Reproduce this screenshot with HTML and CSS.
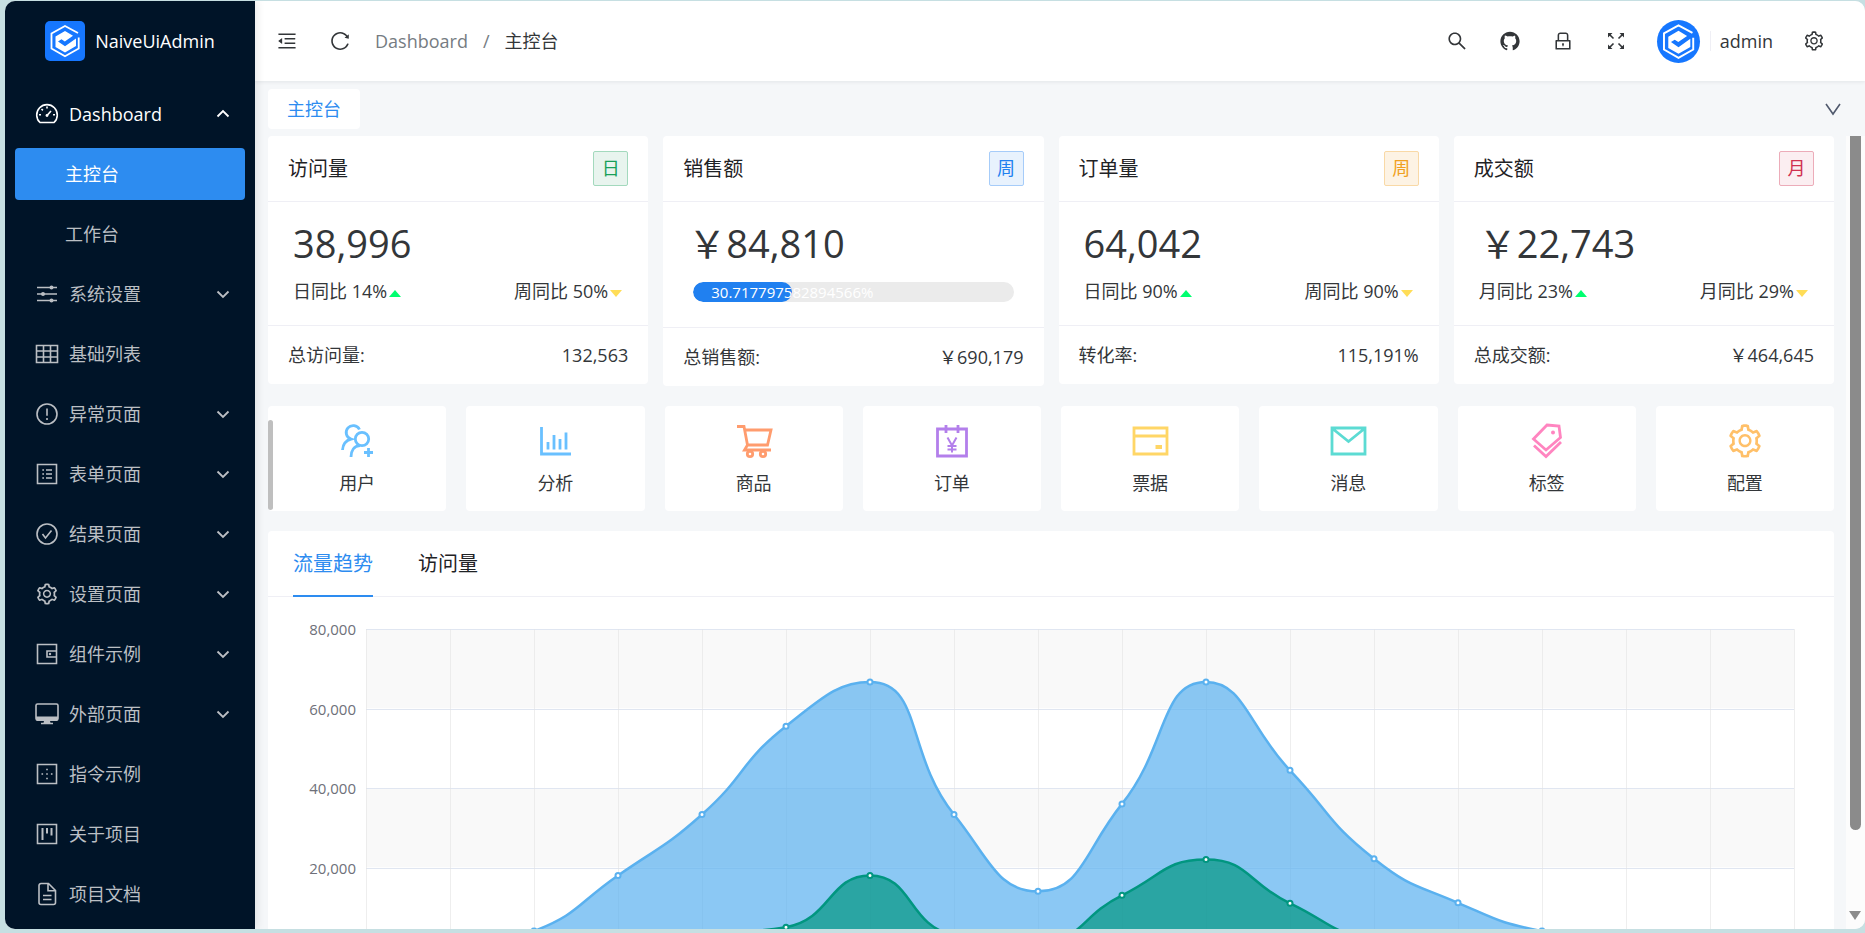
FILE: index.html
```html
<!DOCTYPE html>
<html lang="zh-CN">
<head>
<meta charset="utf-8">
<title>NaiveUiAdmin</title>
<link rel="stylesheet" href="styles.css">
</head>
<body>
<svg class="sprite" aria-hidden="true">
  <symbol id="i-gear" viewBox="0 0 1024 1024"><path fill="currentColor" d="M924.8 625.7l-65.5-56c3.1-19 4.7-38.4 4.7-57.8s-1.6-38.8-4.7-57.8l65.5-56a32.03 32.03 0 0 0 9.3-35.2l-.9-2.6a443.74 443.74 0 0 0-79.7-137.9l-1.8-2.1a32.12 32.12 0 0 0-35.1-9.5l-81.3 28.9c-30-24.6-63.5-44-99.7-57.6l-15.7-85a32.05 32.05 0 0 0-25.8-25.7l-2.7-.5c-52.1-9.4-106.9-9.4-159 0l-2.7.5a32.05 32.05 0 0 0-25.8 25.7l-15.8 85.4a351.86 351.86 0 0 0-99 57.4l-81.9-29.1a32 32 0 0 0-35.1 9.5l-1.8 2.1a446.02 446.02 0 0 0-79.7 137.9l-.9 2.6c-4.5 12.5-.8 26.5 9.3 35.2l66.3 56.6c-3.1 18.8-4.6 38-4.6 57.1 0 19.2 1.5 38.4 4.6 57.1L99 625.5a32.03 32.03 0 0 0-9.3 35.2l.9 2.6c18.1 50.4 44.9 96.9 79.7 137.9l1.8 2.1a32.12 32.12 0 0 0 35.1 9.5l81.9-29.1c29.8 24.5 63.1 43.9 99 57.4l15.8 85.4a32.05 32.05 0 0 0 25.8 25.7l2.7.5a449.4 449.4 0 0 0 159 0l2.7-.5a32.05 32.05 0 0 0 25.8-25.7l15.7-85a350 350 0 0 0 99.7-57.6l81.3 28.9a32 32 0 0 0 35.1-9.5l1.8-2.1c34.8-41.1 61.6-87.5 79.7-137.9l.9-2.6c4.5-12.3.8-26.3-9.3-35zM788.3 465.9c2.5 15.1 3.8 30.6 3.8 46.1s-1.3 31-3.8 46.1l-6.6 40.1 74.7 63.9a370.03 370.03 0 0 1-42.6 73.6L721 702.8l-31.4 25.8c-23.9 19.6-50.5 35-79.3 45.8l-38.1 14.3-17.9 97a377.5 377.5 0 0 1-85 0l-17.9-97.2-37.8-14.5c-28.5-10.8-55-26.2-78.7-45.7l-31.4-25.9-93.4 33.2c-17-22.9-31.2-47.6-42.6-73.6l75.5-64.5-6.5-40c-2.4-14.9-3.7-30.3-3.7-45.5 0-15.3 1.2-30.6 3.7-45.5l6.5-40-75.5-64.5c11.3-26.1 25.6-50.7 42.6-73.6l93.4 33.2 31.4-25.9c23.7-19.5 50.2-34.9 78.7-45.7l37.9-14.3 17.9-97.2c28.1-3.2 56.8-3.2 85 0l17.9 97 38.1 14.3c28.7 10.8 55.4 26.2 79.3 45.8l31.4 25.8 92.8-32.9c17 22.9 31.2 47.6 42.6 73.6L781.8 426l6.5 39.9zM512 326c-97.2 0-176 78.8-176 176s78.8 176 176 176 176-78.8 176-176-78.8-176-176-176zm79.2 255.2A111.6 111.6 0 0 1 512 614c-29.9 0-58-11.7-79.2-32.8A111.6 111.6 0 0 1 400 502c0-29.9 11.7-58 32.8-79.2C454 401.6 482.1 390 512 390c29.9 0 58 11.6 79.2 32.8A111.6 111.6 0 0 1 624 502c0 29.9-11.7 58-32.8 79.2z"/></symbol>
  <symbol id="i-chevron" viewBox="0 0 14 14"><path class="ln" stroke-width="1.8" d="M1.500 4.500L7 10l5.500-5.500"/></symbol>
  <symbol id="i-logo" viewBox="0 0 40 40"><path class="ln" stroke-width="1.8" d="M33 12L20 5 6.500 12.500v15L20 35.300l13.700-7.800V16.500"/><path fill="currentColor" d="M20 10l8 4.800-8.200 5.700-3.300-2.200-3.500 2.200 7 4.800L31 17.500V25l-11 6.500L10.500 26V15.500z"/></symbol>
</svg>
<div class="window">
  <aside class="sider">
    <a class="brand" href="#"><svg class="brand-logo"><use href="#i-logo"/></svg><span>NaiveUiAdmin</span></a>
    <nav class="menu">
      <button class="item open" type="button"><svg class="icon" viewBox="0 0 24 24"><path class="ln" d="M5 20.500A10.300 10.300 0 1 1 19 20.500zM12 13.500l4-4.500M12 4.500v2M6.500 7l1.400 1.400M4 12.800h2M18 12.800h2"/><circle cx="12" cy="13.500" r="1.400" fill="currentColor"/></svg><span>Dashboard</span><svg class="arrow up"><use href="#i-chevron"/></svg></button>
      <a class="item sub active" href="#">主控台</a>
      <a class="item sub" href="#">工作台</a>
      <button class="item" type="button"><svg class="icon" viewBox="0 0 24 24"><path class="ln" d="M2 5.500h20M2 12h20M2 18.500h20"/><g fill="currentColor"><circle cx="16.500" cy="5.500" r="2"/><circle cx="8" cy="12" r="2"/><circle cx="16.500" cy="18.500" r="2"/></g></svg><span>系统设置</span><svg class="arrow"><use href="#i-chevron"/></svg></button>
      <a class="item" href="#"><svg class="icon" viewBox="0 0 24 24"><path class="ln" d="M1.500 3.500h21v17h-21zM1.500 9h21M1.500 15h21M8.500 3.500v17M15.500 3.500v17"/></svg><span>基础列表</span></a>
      <button class="item" type="button"><svg class="icon" viewBox="0 0 24 24"><circle class="ln" cx="12" cy="12" r="10"/><path class="ln" d="M12 6.500v7.200M12 16v2"/></svg><span>异常页面</span><svg class="arrow"><use href="#i-chevron"/></svg></button>
      <button class="item" type="button"><svg class="icon" viewBox="0 0 24 24"><path class="ln" d="M2.500 2.500h19v19h-19zM7.300 8h1.700M7.300 12h1.700M7.300 16h1.700M11 8h6M11 12h6M11 16h6"/></svg><span>表单页面</span><svg class="arrow"><use href="#i-chevron"/></svg></button>
      <button class="item" type="button"><svg class="icon" viewBox="0 0 24 24"><circle class="ln" cx="12" cy="12" r="10"/><path class="ln" d="M7.500 12l3 4 6-7.500"/></svg><span>结果页面</span><svg class="arrow"><use href="#i-chevron"/></svg></button>
      <button class="item" type="button"><svg class="icon"><use href="#i-gear"/></svg><span>设置页面</span><svg class="arrow"><use href="#i-chevron"/></svg></button>
      <button class="item" type="button"><svg class="icon" viewBox="0 0 24 24"><path class="ln" d="M2.500 2.500h19v19h-19zM21.500 9h-9.500v6h9.500"/><circle cx="15" cy="12" r="1.200" fill="currentColor"/></svg><span>组件示例</span><svg class="arrow"><use href="#i-chevron"/></svg></button>
      <button class="item" type="button"><svg class="icon" viewBox="0 0 24 24"><rect class="ln" x="1" y="2" width="22" height="16" rx="1.500"/><path fill="currentColor" d="M1 14.500h22V18l-1 1h-7l.5 1.800h2.500v1.400H6v-1.400h2.500L9 19H2l-1-1z"/></svg><span>外部页面</span><svg class="arrow"><use href="#i-chevron"/></svg></button>
      <a class="item" href="#"><svg class="icon" viewBox="0 0 24 24"><path class="ln" d="M2.500 2.500h19v19h-19zM11.200 7.500h1.600M11.200 12h1.600M11.200 16.500h1.600M6.500 12h1.600M15.900 12h1.600"/></svg><span>指令示例</span></a>
      <a class="item" href="#"><svg class="icon" viewBox="0 0 24 24"><path class="ln" d="M2.500 2.500h19v19h-19z"/><path class="ln" stroke-width="2" d="M7.500 6v12M12 6v5.500M16.500 6v7.500"/></svg><span>关于项目</span></a>
      <a class="item" href="#"><svg class="icon" viewBox="0 0 24 24"><path class="ln" d="M13.500 1.500H6A2 2 0 0 0 4 3.500v17a2 2 0 0 0 2 2h12.500a2 2 0 0 0 2-2V8.500zM13 1.500v7.300h7.500M8 13.500h8.500M8 17.500h8.500"/></svg><span>项目文档</span></a>
    </nav>
  </aside>
  <div class="main">
    <header class="header">
      <button class="tool" type="button" aria-label="折叠菜单"><svg viewBox="0 0 1024 1024"><path fill="currentColor" d="M408 442h480c4.400 0 8-3.600 8-8v-56c0-4.400-3.600-8-8-8H408c-4.400 0-8 3.600-8 8v56c0 4.400 3.600 8 8 8zm-8 204c0 4.400 3.600 8 8 8h480c4.400 0 8-3.600 8-8v-56c0-4.400-3.600-8-8-8H408c-4.400 0-8 3.600-8 8v56zm504-486H120c-4.400 0-8 3.600-8 8v56c0 4.400 3.600 8 8 8h784c4.400 0 8-3.600 8-8v-56c0-4.400-3.600-8-8-8zm0 632H120c-4.400 0-8 3.600-8 8v56c0 4.400 3.600 8 8 8h784c4.400 0 8-3.600 8-8v-56c0-4.400-3.600-8-8-8zM115.400 518.900L271.700 642c5.800 4.600 14.400.5 14.400-6.900V388.900c0-7.400-8.500-11.500-14.400-6.900L115.400 505.100a8.740 8.740 0 0 0 0 13.800z"/></svg></button>
      <button class="tool" type="button" aria-label="刷新"><svg viewBox="0 0 1024 1024"><path fill="currentColor" d="M909.1 209.300l-56.400 44.100C775.800 155.100 656.200 92 521.900 92 290 92 102.300 279.500 102 511.500 101.700 743.700 289.800 932 521.900 932c181.300 0 335.800-115 394.600-276.100 1.500-4.200-.7-8.900-4.900-10.300l-56.700-19.500a8 8 0 0 0-10.100 4.800c-1.800 5-3.800 10-5.900 14.900-17.300 41-42.100 77.800-73.700 109.400A344.770 344.770 0 0 1 655.900 829c-42.300 17.900-87.400 27-133.800 27-46.500 0-91.500-9.100-133.800-27A341.500 341.500 0 0 1 279 755.200a342.160 342.160 0 0 1-73.700-109.400c-17.900-42.400-27-87.400-27-133.900s9.100-91.500 27-133.900c17.300-41 42.100-77.800 73.700-109.400 31.600-31.600 68.400-56.400 109.300-73.800 42.300-17.900 87.400-27 133.800-27 46.500 0 91.500 9.100 133.800 27a341.500 341.500 0 0 1 109.300 73.800c9.900 9.900 19.200 20.400 27.800 31.400l-60.200 47a8 8 0 0 0 3 14.100l175.600 43c5 1.200 9.900-2.600 9.900-7.700l.8-180.900c-.1-6.600-7.800-10.300-13-6.200z"/></svg></button>
      <nav class="crumbs"><a href="#">Dashboard</a><span class="sep">/</span><span class="here">主控台</span></nav>
      <button class="tool" type="button" aria-label="搜索"><svg viewBox="0 0 1024 1024"><path fill="currentColor" d="M909.6 854.500L649.900 594.800C690.200 542.700 712 479 712 412c0-80.200-31.300-155.400-87.900-212.100-56.600-56.700-132-87.900-212.100-87.900s-155.500 31.300-212.100 87.900C143.200 256.500 112 331.800 112 412c0 80.100 31.300 155.500 87.900 212.100C256.500 680.800 331.800 712 412 712c67 0 130.600-21.800 182.700-62l259.700 259.600a8.200 8.200 0 0 0 11.600 0l43.600-43.500a8.200 8.200 0 0 0 0-11.600zM570.400 570.400C528 612.700 471.800 636 412 636s-116-23.300-158.400-65.600C211.300 528 188 471.800 188 412s23.300-116.100 65.600-158.400C296 211.300 352.200 188 412 188s116.100 23.200 158.400 65.600S636 352.200 636 412s-23.300 116.100-65.600 158.400z"/></svg></button>
      <button class="tool" type="button" aria-label="GitHub"><svg viewBox="0 0 1024 1024"><path fill="currentColor" d="M511.600 76.300C264.300 76.200 64 276.400 64 523.500 64 718.900 189.300 885 363.800 946c23.500 5.900 19.900-10.800 19.900-22.200v-77.500c-135.700 15.900-141.200-73.900-150.300-88.900C215 726 171.500 718 184.500 703c30.900-15.900 62.400 4 98.900 57.900 26.400 39.100 77.900 32.500 104 26 5.700-23.500 17.900-44.500 34.700-60.800-140.600-25.200-199.200-111-199.200-213 0-49.500 16.300-95 48.300-131.700-20.400-60.500 1.900-112.300 4.900-120 58.100-5.200 118.500 41.600 123.200 45.300 33-8.900 70.700-13.600 112.900-13.600 42.400 0 80.200 4.900 113.500 13.900 11.300-8.600 67.300-48.800 121.300-43.900 2.900 7.700 24.700 58.300 5.500 118 32.400 36.800 48.900 82.700 48.900 132.300 0 102.200-59 188.100-200 212.900a127.500 127.500 0 0 1 38.100 91v112.500c.8 9 0 17.900 15 17.900 177.100-59.700 304.600-227 304.600-424.100 0-247.200-200.400-447.300-447.500-447.300z"/></svg></button>
      <button class="tool" type="button" aria-label="锁屏"><svg viewBox="0 0 1024 1024"><path fill="currentColor" d="M832 464h-68V240c0-70.700-57.300-128-128-128H388c-70.700 0-128 57.300-128 128v224h-68c-17.700 0-32 14.300-32 32v384c0 17.700 14.300 32 32 32h640c17.700 0 32-14.300 32-32V496c0-17.700-14.300-32-32-32zM332 240c0-30.900 25.100-56 56-56h248c30.900 0 56 25.100 56 56v224H332V240zm460 600H232V536h560v304zM484 701v53c0 4.400 3.600 8 8 8h40c4.400 0 8-3.600 8-8v-53a48.010 48.010 0 1 0-56 0z"/></svg></button>
      <button class="tool" type="button" aria-label="全屏"><svg viewBox="0 0 22 22"><path class="ln" d="M4 4l4.500 4.500M18 4l-4.500 4.500M4 18l4.500-4.500M18 18l-4.500-4.500"/><path fill="currentColor" d="M3 3h4.500L3 7.500zM19 3h-4.500L19 7.500zM3 19h4.500L3 14.500zM19 19h-4.500l4.500-4.500z"/></svg></button>
      <button class="user" type="button"><svg class="avatar"><use href="#i-logo"/></svg><span class="name">admin</span></button>
      <button class="tool" type="button" aria-label="设置"><svg><use href="#i-gear"/></svg></button>
    </header>
    <div class="tabs-bar">
      <a class="page-tab" href="#">主控台</a>
      <button class="tabs-more" type="button" aria-label="更多"><svg viewBox="0 0 16 16"><path class="ln" d="M1 3l7 10 7-10"/></svg></button>
    </div>
    <div class="scroller">
      <main class="content">
        <section class="stats">
          <article class="card">
            <header><h2>访问量</h2><span class="tag green">日</span></header>
            <div class="body"><p class="big">38,996</p><div class="trend"><span>日同比 14%<i class="up-tri"></i></span><span>周同比 50%<i class="down-tri"></i></span></div></div>
            <footer><span>总访问量:</span><span>132,563</span></footer>
          </article>
          <article class="card">
            <header><h2>销售额</h2><span class="tag blue">周</span></header>
            <div class="body"><p class="big">&#xFFE5;84,810</p><div class="progress"><div class="rail"><div class="fill" style="width:30.718%"></div><span>30.717797582894566%</span></div></div></div>
            <footer><span>总销售额:</span><span>&#xFFE5;690,179</span></footer>
          </article>
          <article class="card">
            <header><h2>订单量</h2><span class="tag orange">周</span></header>
            <div class="body"><p class="big">64,042</p><div class="trend"><span>日同比 90%<i class="up-tri"></i></span><span>周同比 90%<i class="down-tri"></i></span></div></div>
            <footer><span>转化率:</span><span>115,191%</span></footer>
          </article>
          <article class="card">
            <header><h2>成交额</h2><span class="tag red">月</span></header>
            <div class="body"><p class="big">&#xFFE5;22,743</p><div class="trend"><span>月同比 23%<i class="up-tri"></i></span><span>月同比 29%<i class="down-tri"></i></span></div></div>
            <footer><span>总成交额:</span><span>&#xFFE5;464,645</span></footer>
          </article>
        </section>
        <section class="quick">
          <a class="entry user-c" href="#"><svg viewBox="0 0 38 38"><circle class="ln" cx="24" cy="17" r="6.700"/><path class="ln" d="M13 35c0-6 3-11 9-11.500M21.500 7.500A7 7 0 1 0 13 17.200C8 18.500 5 22 4.500 28M30.500 26v9M26 30.500h9"/></svg><span>用户</span></a>
          <a class="entry chart-c" href="#"><svg viewBox="0 0 38 38"><path class="ln" d="M5.500 5v27H35M12 20v7.500M18 13v14.500M24 17v10.500M30 10.500v17"/></svg><span>分析</span></a>
          <a class="entry cart-c" href="#"><svg viewBox="0 0 38 38"><path class="ln" d="M2 4.500h7L12.500 23h20L36 8H10M12.500 23L9.500 28H36"/><circle class="ln" cx="15" cy="32" r="2.700"/><circle class="ln" cx="28" cy="32" r="2.700"/></svg><span>商品</span></a>
          <a class="entry order-c" href="#"><svg viewBox="0 0 38 38"><path class="ln" d="M4.500 7h29v27h-29zM13 3v8M25 3v8"/><path class="ln" stroke-width="2" d="M14.500 15.500l4.500 8 4.500-8M19 23v7.500M14.500 24h9M14.500 27.500h9"/></svg><span>订单</span></a>
          <a class="entry card-c" href="#"><svg viewBox="0 0 38 38"><path class="ln" d="M3 6h33v26H3zM3 14h33"/><path fill="currentColor" d="M24.500 23h6.500v4h-6.500z"/></svg><span>票据</span></a>
          <a class="entry mail-c" href="#"><svg viewBox="0 0 38 38"><path class="ln" d="M3 6h33v26H3zM4 7l15.500 12.500L35 7"/></svg><span>消息</span></a>
          <a class="entry tag-c" href="#"><svg viewBox="0 0 38 38"><path class="ln" d="M19 3l12 1 1.500 11.500L18 28 5.500 17zM6 23.500L18 34.500 33 20"/><circle cx="25" cy="10.500" r="2" fill="currentColor"/></svg><span>标签</span></a>
          <a class="entry set-c" href="#"><svg><use href="#i-gear"/></svg><span>配置</span></a>
        </section>
        <section class="panel">
          <div class="panel-tabs"><button class="on" type="button">流量趋势</button><button type="button">访问量</button></div>
          <svg class="chart" id="chart" role="img" aria-label="流量趋势"></svg>
        </section>
      </main>
      <div class="scrollbar"><div class="thumb"></div><div class="down"></div></div>
    </div>
  </div>
  <div class="sider-thumb"></div>
</div>
<script src="chart.js"></script>
</body>
</html>
```
FILE: styles.css
```css
* { box-sizing: border-box; }
body {
  margin: 0;
  height: 100vh;
  padding: 1px 0 4px 5px;
  overflow: hidden;
  background: #c6dfe2;
  color: #333639;
  font-family: "Open Sans", "Noto Sans CJK SC", sans-serif;
  font-size: 18px;
  line-height: 26px;
}
button { font: inherit; color: inherit; background: none; border: 0; padding: 0; cursor: pointer; }
a { color: inherit; text-decoration: none; }
h2, p { margin: 0; font-weight: 400; }
.sprite { display: none; }
.ln { fill: none; stroke: currentColor; }
.window { position: relative; display: flex; height: 100%; border-radius: 10px; overflow: hidden; background: #f5f7f9; }

.sider { flex: none; width: 250px; background: #001428; color: #bbbfc4; box-shadow: 2px 0 8px rgba(29, 35, 41, .1); z-index: 1; }
.brand { display: flex; align-items: center; justify-content: center; gap: 10px; height: 80px; color: #fff; }
.brand-logo { width: 40px; height: 40px; border-radius: 5px; background: #1677ff; }
.menu { display: flex; flex-direction: column; gap: 8px; padding: 7px 10px; }
.item { display: flex; align-items: center; gap: 10px; height: 52px; padding: 0 15px 0 20px; border-radius: 4px; text-align: left; }
.item.open { color: #fff; }
.item.sub { padding-left: 50px; }
.item.active { background: #2d8cf0; color: #fff; }
.icon { width: 24px; height: 24px; stroke-width: 1.6; }
.arrow { width: 14px; height: 14px; margin-left: auto; }
.arrow.up { transform: rotate(180deg); }

.main { flex: 1; min-width: 0; display: flex; flex-direction: column; }
.header { flex: none; display: flex; align-items: center; height: 80px; padding: 0 25px 0 5px; background: #fff; box-shadow: 0 1px 4px rgba(0, 21, 41, .08); }
.tool { display: grid; place-items: center; width: 53px; height: 80px; }
.tool svg { width: 22px; height: 22px; stroke-width: 1.6; }
.crumbs { display: flex; gap: 15px; flex: 1; padding-left: 9px; color: #767c82; }
.here { color: #333639; }
.user { display: flex; align-items: center; padding: 0 14px; }
.avatar { width: 43px; height: 43px; border-radius: 50%; background: #1677ff; color: #fff; }
.name { margin-left: 10px; padding-left: 10px; background: linear-gradient(#efeff5, #efeff5) left center / 1px 20px no-repeat; }

.tabs-bar { flex: none; display: flex; align-items: center; justify-content: space-between; height: 55px; padding: 0 24px 0 13px; }
.page-tab { padding: 7px 19px; border-radius: 4px; background: #fff; color: #2d8cf0; }
.tabs-more { color: #515a6e; }
.tabs-more svg { display: block; width: 16px; height: 16px; stroke-width: 1.6; }

.scroller { flex: 1; min-height: 0; display: flex; }
.content { flex: 1; min-width: 0; display: flex; flex-direction: column; gap: 20px; padding: 0 12px 0 13px; overflow: hidden; }
.stats { display: grid; grid-template-columns: repeat(4, 1fr); align-items: start; gap: 15px; }
.card, .entry, .panel { background: #fff; border-radius: 4px; }
.card header { display: flex; align-items: center; justify-content: space-between; height: 66px; padding: 0 20px; border-bottom: 1px solid #efeff5; }
h2 { font-size: 20px; color: #1f2225; }
.tag { width: 35px; padding: 4px 0; border: 1px solid; border-radius: 2px; line-height: 25px; text-align: center; }
.green { color: #18a058; background: #e8f4ee; border-color: #a3d9bd; }
.blue { color: #2080f0; background: #e8f2fd; border-color: #a6ccf9; }
.orange { color: #f0a020; background: #fdf3e4; border-color: #f9d9a6; }
.red { color: #d03050; background: #fbeef1; border-color: #ecacb9; }
.body { padding: 17px 26px 21px 25px; }
.big { margin-bottom: 11px; font-size: 38px; line-height: 48px; }
.trend { display: flex; justify-content: space-between; }
.up-tri, .down-tri { display: inline-block; margin-left: 2px; vertical-align: middle; border: 6px solid transparent; }
.up-tri { border-top: 0; border-bottom: 7px solid #00ff6f; }
.down-tri { border-bottom: 0; border-top: 7px solid #ffdd57; }
.progress { display: flex; align-items: center; height: 28px; padding: 0 4px 0 5px; }
.rail { position: relative; flex: 1; height: 20px; border-radius: 10px; background: #ebebeb; overflow: hidden; color: #fff; font-size: 15px; line-height: 20px; }
.fill { position: absolute; inset: 0 auto 0 0; border-radius: 10px; background: #2080f0; }
.rail span { position: relative; margin-left: 18px; }
.card footer { display: flex; justify-content: space-between; padding: 16px 20px; border-top: 1px solid #efeff5; }

.quick { display: grid; grid-template-columns: repeat(8, 1fr); gap: 20px; }
.entry { display: flex; flex-direction: column; align-items: center; gap: 10px; padding: 16px 0 15px; }
.entry svg { width: 38px; height: 38px; stroke-width: 2.8; }
.user-c svg, .chart-c svg { color: #69c0ff; }
.cart-c svg { color: #ff9c6e; }
.order-c svg { color: #b37feb; }
.card-c svg { color: #ffd666; }
.mail-c svg { color: #5cdbd3; }
.tag-c svg { color: #ff85c0; }
.set-c svg { color: #ffc069; }

.panel-tabs { display: flex; gap: 45px; padding: 0 25px; border-bottom: 1px solid #efeff5; }
.panel-tabs button { margin-bottom: -1px; padding: 20px 0 18px; border-bottom: 2px solid transparent; font-size: 20px; color: #1f2225; }
.panel-tabs .on { color: #2d8cf0; border-color: #2d8cf0; }
.chart { display: block; width: 100%; height: 400px; }
.chart text { font-size: 15px; fill: #6e7079; text-anchor: end; }

.scrollbar { flex: none; display: flex; flex-direction: column; justify-content: space-between; align-items: center; width: 19px; padding-right: 1px; padding-bottom: 9px; background: #fcfcfc; }
.thumb { width: 11px; height: 694px; flex: 0 1 auto; max-height: 89%; border-radius: 0 0 6px 6px; background: #8b8b8b; }
.down { border: 6px solid transparent; border-bottom: 0; border-top: 9px solid #8b8b8b; }
.sider-thumb { position: absolute; left: 263px; top: 419px; width: 5px; height: 90px; border-radius: 3px; background: #bfbfbf; z-index: 2; }
```
FILE: chart.js
```js
const svg = document.getElementById('chart');
const blue = [111, 222, 4000, 18000, 33333, 55555, 66666, 33333, 14000, 36000, 66666, 44444, 22222, 11111, 4000, 2000, 500, 333];
const green = [33, 66, 88, 333, 3333, 5000, 18000, 3000, 1200, 13000, 22000, 11000, 2221, 1201, 390, 198, 60, 30];
const MAX = 80000, STEP = 20000;
const area = { top: 32, left: 98, right: 40, height: 318 };

const clamp = (v, a, b) => Math.max(Math.min(v, Math.max(a, b)), Math.min(a, b));

// Smooth bezier path through the points, with control points kept inside each segment.
function smoothPath(p) {
  let d = `M${p[0]}`, c0 = p[0];
  for (let i = 1; i < p.length; i++) {
    const cur = p[i], prev = p[i - 1], next = p[i + 1];
    let c1 = cur, n0 = cur;
    if (next) {
      const lp = Math.hypot(cur[0] - prev[0], cur[1] - prev[1]);
      const ln = Math.hypot(next[0] - cur[0], next[1] - cur[1]);
      const r = ln / (ln + lp);
      c1 = []; n0 = [];
      for (const k of [0, 1]) {
        const n = clamp(cur[k] + (next[k] - prev[k]) * 0.5 * r, next[k], cur[k]);
        c1[k] = clamp(cur[k] - (n - cur[k]) * lp / ln, prev[k], cur[k]);
        n0[k] = cur[k] + (cur[k] - c1[k]) * ln / lp;
      }
    }
    d += `C${c0} ${c1} ${cur}`;
    c0 = n0;
  }
  return d;
}

function draw() {
  const w = svg.clientWidth - area.left - area.right;
  const base = area.top + area.height;
  const x = i => area.left + w * i / (blue.length - 1);
  const y = v => base - area.height * v / MAX;
  let out = '';
  for (let v = MAX; v > 0; v -= STEP) {
    const shade = (v / STEP) % 2 ? '#fff' : '#f9f9f9';
    out += `<rect x="${area.left}" y="${y(v)}" width="${w}" height="${y(0) - y(STEP)}" fill="${shade}"/>`;
  }
  for (let v = MAX; v > 0; v -= STEP) {
    const ly = Math.round(y(v)) + 0.5;
    out += `<path d="M${area.left} ${ly}h${w}" stroke="#e0e6f1"/>`;
    out += `<text x="${area.left - 10}" y="${ly + 5}">${v.toLocaleString('en-US')}</text>`;
  }
  for (let i = 0; i < blue.length; i++) {
    out += `<path d="M${Math.round(x(i)) + 0.5} ${area.top}V${base}" stroke="#e2e2e2" stroke-opacity=".6"/>`;
  }
  for (const [data, color] of [[blue, '#5ab1ef'], [green, '#019680']]) {
    const pts = data.map((v, i) => [x(i), y(v)]);
    const line = smoothPath(pts);
    out += `<path d="${line}V${base}H${area.left}Z" fill="${color}" fill-opacity=".7"/>`;
    out += `<path d="${line}" fill="none" stroke="${color}" stroke-width="2.5"/>`;
    for (const [px, py] of pts) {
      out += `<circle cx="${px}" cy="${py}" r="2.5" fill="#fff" stroke="${color}" stroke-width="2"/>`;
    }
  }
  svg.innerHTML = out;
}

draw();
window.addEventListener('resize', draw);
```
